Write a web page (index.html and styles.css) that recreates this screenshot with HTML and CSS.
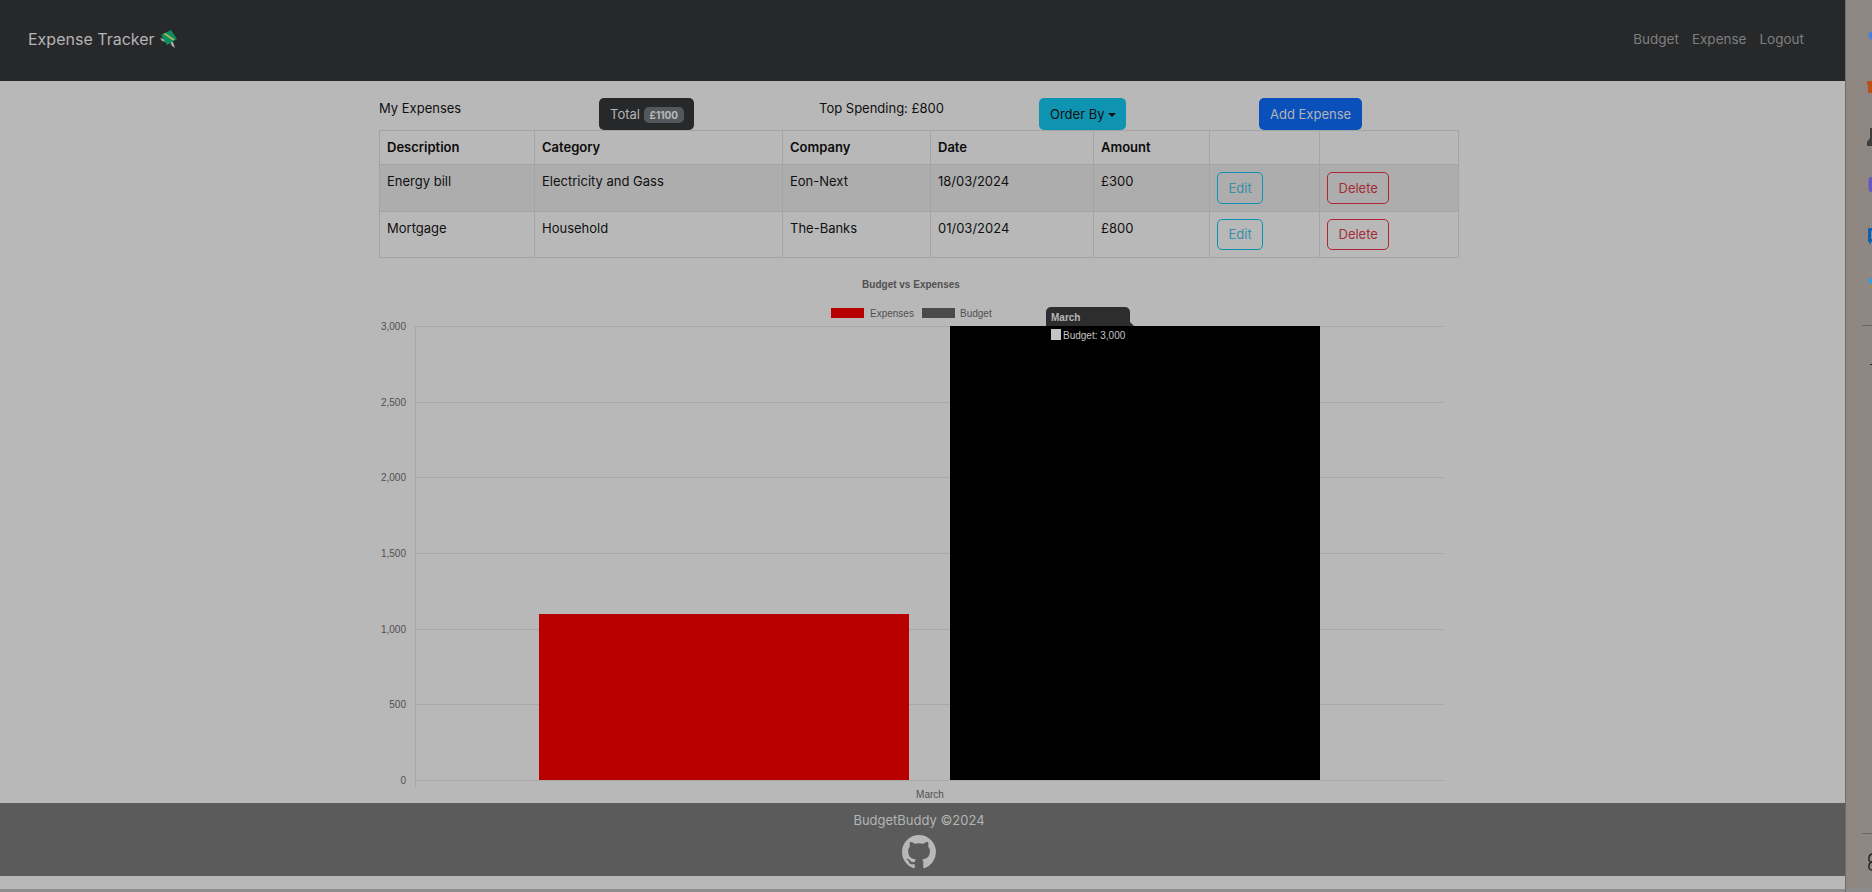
FILE: index.html
```html
<!DOCTYPE html>
<html>
    <head>
        <title>Expense Tracker</title>
        <meta name="viewport" content="width=device-width, initial-scale=1">
        <link rel="stylesheet" href="styles.css">
    </head>
    <body>
        <div class="page">
            <nav class="navbar">
                <a class="brand">Expense Tracker
                    <svg class="brand-icon" width="17" height="18" viewBox="0 0 17 18">
                        <path d="M0 8l4 1 2 3-4-1z" fill="#a9a9a9"/>
                        <path d="M10 12l3 0 2 6-3-2z" fill="#a9a9a9"/>
                        <path d="M1 5l10-5 6 9-10 6z" fill="#0b8f5f"/>
                        <path d="M3.5 3.8l1.6-.8 9.6 6.6-1.6 1z" fill="#c8b654"/>
                    </svg>
                </a>
                <div class="nav-links">
                    <a>Budget</a>
                    <a>Expense</a>
                    <a>Logout</a>
                </div>
            </nav>

            <main class="content">
                <div class="toolbar">
                    <div class="toolbar-text">My Expenses</div>
                    <div><button class="btn btn-dark">Total <span class="badge">£1100</span></button></div>
                    <div class="toolbar-text">Top Spending: £800</div>
                    <div><button class="btn btn-info">Order By <span class="caret"></span></button></div>
                    <div><button class="btn btn-primary">Add Expense</button></div>
                </div>

                <table class="expenses">
                    <thead>
                        <tr>
                            <th class="col-desc">Description</th>
                            <th class="col-cat">Category</th>
                            <th class="col-comp">Company</th>
                            <th class="col-date">Date</th>
                            <th class="col-amt">Amount</th>
                            <th class="col-edit"></th>
                            <th></th>
                        </tr>
                    </thead>
                    <tbody>
                        <tr class="hovered">
                            <td>Energy bill</td>
                            <td>Electricity and Gass</td>
                            <td>Eon-Next</td>
                            <td>18/03/2024</td>
                            <td>£300</td>
                            <td><button class="btn-line btn-edit">Edit</button></td>
                            <td><button class="btn-line btn-delete">Delete</button></td>
                        </tr>
                        <tr>
                            <td>Mortgage</td>
                            <td>Household</td>
                            <td>The-Banks</td>
                            <td>01/03/2024</td>
                            <td>£800</td>
                            <td><button class="btn-line btn-edit">Edit</button></td>
                            <td><button class="btn-line btn-delete">Delete</button></td>
                        </tr>
                    </tbody>
                </table>

                <svg class="chart" width="1100" height="545" viewBox="369 258 1100 545">
                    <text class="chart-title" x="911" y="288" text-anchor="middle">Budget vs Expenses</text>

                    <rect x="831" y="308" width="33" height="10" fill="#b80000"/>
                    <text class="chart-label" x="870" y="317">Expenses</text>
                    <rect x="922" y="308" width="33" height="10" fill="#4a4a4a"/>
                    <text class="chart-label" x="960" y="317">Budget</text>

                    <g class="grid">
                        <line x1="415" y1="326.5" x2="1444" y2="326.5"/>
                        <line x1="415" y1="402.5" x2="1444" y2="402.5"/>
                        <line x1="415" y1="477.5" x2="1444" y2="477.5"/>
                        <line x1="415" y1="553.5" x2="1444" y2="553.5"/>
                        <line x1="415" y1="629.5" x2="1444" y2="629.5"/>
                        <line x1="415" y1="704.5" x2="1444" y2="704.5"/>
                        <line x1="415" y1="780.5" x2="1444" y2="780.5"/>
                        <line x1="415.5" y1="326" x2="415.5" y2="787"/>
                    </g>

                    <g class="chart-label" text-anchor="end">
                        <text x="406" y="330">3,000</text>
                        <text x="406" y="406">2,500</text>
                        <text x="406" y="481">2,000</text>
                        <text x="406" y="557">1,500</text>
                        <text x="406" y="633">1,000</text>
                        <text x="406" y="708">500</text>
                        <text x="406" y="784">0</text>
                    </g>
                    <text class="chart-label" x="930" y="798" text-anchor="middle">March</text>

                    <rect x="539" y="614" width="370" height="166" fill="#b80000"/>
                    <rect x="950" y="326" width="370" height="454" fill="#000"/>

                    <path d="M1046 326v-14a5 5 0 0 1 5-5h74a5 5 0 0 1 5 5v10l4 4z" fill="#2d2d2d"/>
                    <text class="tip-title" x="1051" y="321">March</text>
                    <rect x="1051" y="329" width="10" height="11" fill="#c4c4c4"/>
                    <text class="tip-body" x="1063" y="339">Budget: 3,000</text>
                </svg>
            </main>

            <footer class="footer">
                <div>BudgetBuddy ©2024</div>
                <svg class="github" viewBox="0 0 16 16" width="34" height="34">
                    <path fill="#b8b8b8" d="M8 0C3.58 0 0 3.58 0 8c0 3.54 2.29 6.53 5.47 7.59.4.07.55-.17.55-.38 0-.19-.01-.82-.01-1.49-2.01.37-2.53-.49-2.69-.94-.09-.23-.48-.94-.82-1.13-.28-.15-.68-.52-.01-.53.63-.01 1.08.58 1.23.82.72 1.21 1.87.87 2.33.66.07-.52.28-.87.51-1.07-1.78-.2-3.64-.89-3.64-3.95 0-.87.31-1.59.82-2.15-.08-.2-.36-1.02.08-2.12 0 0 .67-.21 2.2.82.64-.18 1.32-.27 2-.27s1.36.09 2 .27c1.53-1.04 2.2-.82 2.2-.82.44 1.1.16 1.92.08 2.12.51.56.82 1.27.82 2.15 0 3.07-1.87 3.75-3.65 3.95.29.25.54.73.54 1.48 0 1.07-.01 1.93-.01 2.2 0 .21.15.46.55.38A8.01 8.01 0 0 0 16 8c0-4.42-3.58-8-8-8z"/>
                </svg>
            </footer>
            <div class="page-end"></div>
        </div>

        <aside class="sidebar">
            <svg width="26" height="892" viewBox="1846 0 26 892">
                <circle cx="1873" cy="35.5" r="4.5" fill="#4a7fdc"/>
                <path d="M1867 81h5v12h-4v-8h-1z" fill="#b9501c"/>
                <path d="M1867 146v-4l3-4v-10h2v18z" fill="#3e3e3e"/>
                <rect x="1868.5" y="177" width="6" height="15" rx="3" fill="#6258c0"/>
                <path d="M1868 228h4v3h-1v8h1v3h-1l-1 3-1-3h-1z" fill="#0c62b0"/>
                <path d="M1867 279l5-1v6h-2z" fill="#3d9ad0"/>
                <path d="M1871 284h1v4h-1z" fill="#a8923a"/>
                <line x1="1862" y1="325.5" x2="1872" y2="325.5" stroke="#6d6762"/>
                <line x1="1870" y1="364.5" x2="1872" y2="364.5" stroke="#222"/>
                <line x1="1862" y1="833.5" x2="1872" y2="833.5" stroke="#6d6762"/>
                <path d="M1872 854a4 4 0 0 0-3 4 3 3 0 0 0 3 4a4 4 0 0 0-3 4 3 3 0 0 0 3 4" fill="none" stroke="#222" stroke-width="1.4"/>
                <rect x="1846" y="889" width="26" height="3" fill="#8c8c8c"/>
            </svg>
        </aside>
    </body>
</html>
```

FILE: styles.css
```css
body, html {
    height: 100%;
    margin: 0;
    background-color: #8f8781;
    overflow: hidden;
}

body {
    display: flex;
    font-family: "Inter", "Liberation Sans", sans-serif;
    font-size: 13px;
    color: #101010;
}

.page {
    width: 1845px;
    height: 892px;
    flex: none;
    display: flex;
    flex-direction: column;
    background-color: #b8b8b8;
    border-right: 1px solid #6f6b68;
}

.navbar {
    height: 81px;
    flex: none;
    display: flex;
    align-items: center;
    justify-content: space-between;
    padding: 0 41px 3px 28px;
    box-sizing: border-box;
    background-color: #27282a;
    color: #b4b4b4;
}

.brand {
    font-size: 16px;
    display: flex;
    align-items: center;
    gap: 5px;
}

.brand-icon {
    display: block;
}

.nav-links {
    display: flex;
    gap: 13px;
    font-size: 13.5px;
    color: #7e7e7e;
}

.content {
    flex: 1;
    box-sizing: border-box;
    width: 1100px;
    margin-left: 369px;
    padding: 17px 10px 0;
    display: flex;
    flex-direction: column;
}

.toolbar {
    display: grid;
    grid-template-columns: repeat(5, 220px);
    height: 32px;
}

.toolbar-text {
    padding-top: 1px;
    line-height: 18px;
}

.btn {
    height: 32px;
    border: none;
    border-radius: 5px;
    padding: 0 11px;
    font-family: inherit;
    font-size: 13px;
}

.btn-dark {
    background-color: #27282a;
    color: #b4b4b4;
    padding-right: 10px;
}

.badge {
    display: inline-block;
    margin-left: 0;
    padding: 2px 6px;
    border-radius: 5px;
    background-color: #54585d;
    color: #b8b8b8;
    font-size: 10px;
    font-weight: 700;
}

.btn-info {
    background-color: #0e94b0;
    color: #101010;
    padding-right: 10px;
}

.caret {
    display: inline-block;
    vertical-align: 2px;
    border-top: 4px solid #101010;
    border-left: 4px solid transparent;
    border-right: 4px solid transparent;
}

.btn-primary {
    background-color: #0a50ba;
    color: #b4b4b4;
}

.expenses {
    width: 1080px;
    border-collapse: collapse;
    table-layout: fixed;
}

.expenses th, .expenses td {
    box-sizing: border-box;
    border: 1px solid #a2a4a6;
    padding: 7px;
    text-align: left;
    vertical-align: top;
    line-height: 19px;
}

.expenses th {
    height: 34px;
    font-weight: 600;
    color: #0c0c0c;
}

.col-desc { width: 155px; }
.col-cat { width: 248px; }
.col-comp { width: 148px; }
.col-date { width: 163px; }
.col-amt { width: 116px; }
.col-edit { width: 110px; }

.hovered td {
    background-color: #adadad;
}

.btn-line {
    display: block;
    height: 31.5px;
    padding: 0 10.5px;
    background: none;
    border-radius: 5px;
    font-family: inherit;
    font-size: 13px;
}

.btn-edit {
    border: 1px solid #0e94b0;
    color: #3a8ea6;
}

.btn-delete {
    border: 1px solid #ae2432;
    color: #a32d38;
}

.chart {
    flex: none;
    margin: 0 -10px;
    display: block;
}

.chart-title {
    font: bold 10px "Liberation Sans", sans-serif;
    fill: #505050;
}

.chart-label, .chart-label text {
    font: 10px "Liberation Sans", sans-serif;
    fill: #505050;
}

.grid line {
    stroke: #a8a8a8;
    stroke-width: 1;
}

.tip-title {
    font: bold 10px "Liberation Sans", sans-serif;
    fill: #b8b8b8;
}

.tip-body {
    font: 10px "Liberation Sans", sans-serif;
    fill: #c4c4c4;
}

.footer {
    height: 73px;
    flex: none;
    box-sizing: border-box;
    padding: 8px 7px 0 0;
    display: flex;
    flex-direction: column;
    align-items: center;
    gap: 6px;
    background-color: #5b5b5b;
    color: #b4b4b4;
    line-height: 18px;
}

.github {
    display: block;
}

.page-end {
    height: 16px;
    flex: none;
    box-sizing: border-box;
    background-color: #b8b8b8;
    border-bottom: 3px solid #8c8c8c;
}

.sidebar {
    width: 26px;
    height: 892px;
    flex: none;
}

.sidebar svg {
    display: block;
}
```
